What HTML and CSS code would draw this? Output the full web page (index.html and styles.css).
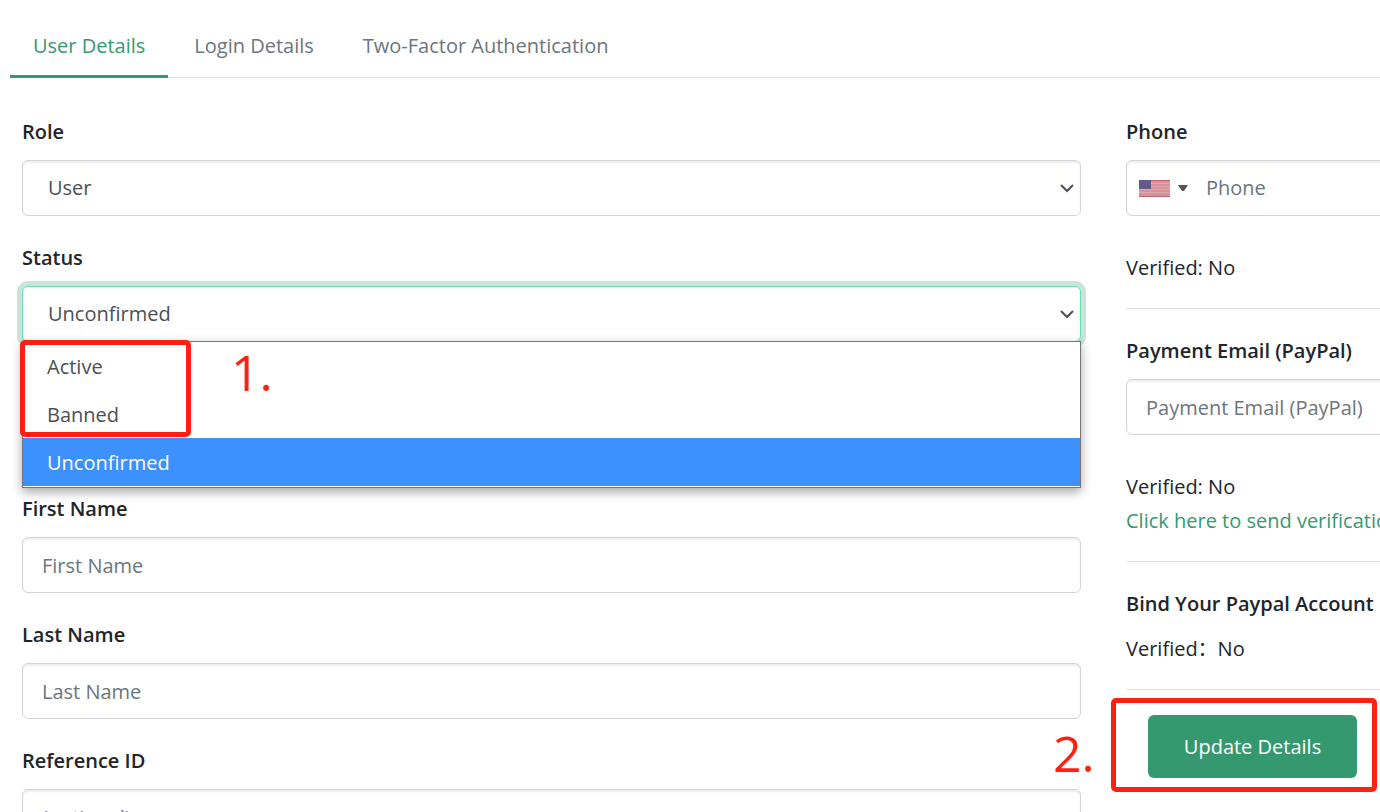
FILE: index.html
```html
<!DOCTYPE html>
<html lang="en">
<head>
<meta charset="utf-8">
<title>User Details</title>
<link rel="stylesheet" href="styles.css">
</head>
<body>
<main class="page">
  <nav class="tabs">
    <a class="tab tab-active" href="#user">User Details</a>
    <a class="tab" href="#login">Login Details</a>
    <a class="tab" href="#two-factor">Two-Factor Authentication</a>
  </nav>
  <form class="columns">
    <div class="column">
      <div class="field">
        <label class="label" for="role">Role</label>
        <div class="select-box">
          <select class="control select" id="role"><option>User</option></select>
          <svg class="chevron" viewBox="0 0 14 10" aria-hidden="true"><path d="M1 2l6 6 6-6"/></svg>
        </div>
      </div>
      <div class="field field-open">
        <label class="label" for="status">Status</label>
        <div class="select-box">
          <select class="control select select-focused" id="status"><option>Active</option><option>Banned</option><option selected>Unconfirmed</option></select>
          <svg class="chevron" viewBox="0 0 14 10" aria-hidden="true"><path d="M1 2l6 6 6-6"/></svg>
        </div>
        <div class="menu">
          <ul class="options" role="listbox" aria-label="Status">
            <li class="option" role="option">Active</li>
            <li class="option" role="option">Banned</li>
            <li class="option option-selected" role="option" aria-selected="true">Unconfirmed</li>
          </ul>
          <span class="mark mark-options"></span>
          <span class="step step-one">1.</span>
        </div>
      </div>
      <div class="field">
        <label class="label" for="first">First Name</label>
        <input class="control" id="first" type="text" placeholder="First Name">
      </div>
      <div class="field">
        <label class="label" for="last">Last Name</label>
        <input class="control" id="last" type="text" placeholder="Last Name">
      </div>
      <div class="field">
        <label class="label" for="reference">Reference ID</label>
        <input class="control" id="reference" type="text" placeholder="(optional)">
      </div>
    </div>
    <div class="column">
      <section class="group">
        <label class="label" for="phone">Phone</label>
        <div class="control phone">
          <button class="country" type="button" aria-label="United States">
            <svg class="flag" viewBox="0 0 31 17" aria-hidden="true">
              <rect width="31" height="17" fill="#d9909a"/>
              <path d="M0 .5h31M0 16.5h31" stroke="#c4626e"/>
              <path d="M0 3.5h31M0 6.5h31M0 9.5h31M0 12.5h31" stroke="#e0a9b0"/>
              <rect width="12" height="9" fill="#5f5b8a"/>
            </svg>
            <svg class="caret" viewBox="0 0 10 6" aria-hidden="true"><path d="M0 0h10L6 6H4z"/></svg>
          </button>
          <input class="phone-input" id="phone" type="tel" placeholder="Phone">
        </div>
        <p class="note note-spaced">Verified: No</p>
      </section>
      <section class="group">
        <label class="label" for="email">Payment Email (PayPal)</label>
        <input class="control" id="email" type="email" placeholder="Payment Email (PayPal)">
        <p class="note note-spaced">Verified: No</p>
        <p class="note"><a class="link" href="#verify">Click here to send verification email</a></p>
      </section>
      <section class="group">
        <h2 class="label">Bind Your Paypal Account</h2>
        <p class="note">Verified：No</p>
      </section>
      <div class="action">
        <button class="submit" type="button">Update Details</button>
        <span class="mark mark-submit"></span>
        <span class="step step-two">2.</span>
      </div>
    </div>
  </form>
</main>
</body>
</html>
```

FILE: styles.css
```css
* { box-sizing: border-box; }
html { height: 100%; overflow: hidden; }
body {
  height: 100%;
  margin: 0;
  overflow: hidden;
  background: #fff;
  color: #212529;
  font: 20px/34px "Open Sans", "Noto Sans CJK SC", sans-serif;
}
input, select, button { font: inherit; }
.page { width: 120%; }

.tabs {
  display: flex;
  gap: 3px;
  margin-left: 10px;
  padding-top: 15px;
  border-bottom: 1px solid #dee2e6;
}
.tab {
  margin-bottom: -1px;
  padding: 14px 23px 12px;
  border-bottom: 3px solid transparent;
  color: #6c757d;
  text-decoration: none;
}
.tab-active { border-color: #35996f; color: #35996f; }

.columns {
  display: grid;
  grid-template-columns: 2fr 1fr;
  padding-top: 37px;
}
.column { min-width: 0; padding: 0 23px 0 22px; }
.field { margin-bottom: 25px; }
.field-open { margin-bottom: 4px; }
.label {
  display: block;
  margin: 0 0 11px;
  font-size: 20px;
  font-weight: 600;
}
.control {
  display: block;
  width: 100%;
  height: 56px;
  padding: 0 19px;
  border: 1px solid #ced4da;
  border-radius: 6px;
  background: #fff;
  box-shadow: inset 0 2px 2px rgba(0, 0, 0, .07);
  color: #495057;
  outline: 0;
}
::placeholder { color: #6c757d; opacity: 1; }
.select-box { position: relative; }
.select { padding: 0 25px; appearance: none; }
.select-focused {
  border-color: #69dfb0;
  box-shadow: 0 0 0 5px #cae4d9;
}
.chevron {
  position: absolute;
  top: 23px;
  right: 7px;
  width: 14px;
  height: 10px;
  fill: none;
  stroke: #495057;
  stroke-width: 2;
}

.menu {
  position: relative;
  margin-top: -1px;
  border: 1px solid #767676;
  background: #fff;
  box-shadow: 0 4px 10px rgba(0, 0, 0, .35);
}
.options { margin: 0; padding: 0 0 1px; list-style: none; }
.option { padding: 8px 24px 6px; color: #495057; }
.option-selected { background: #3c91ff; color: #fff; }
.mark {
  position: absolute;
  border: 5px solid #ff2012;
  border-radius: 5px;
  pointer-events: none;
}
.mark-options { top: -2px; left: -3px; width: 171px; height: 97px; }
.step {
  position: absolute;
  color: #ff2012;
  font-size: 50px;
  line-height: 60px;
}
.step-one { top: 0; left: 208px; }

.phone { display: flex; align-items: center; padding: 0 0 0 12px; }
.country {
  display: flex;
  align-items: center;
  gap: 8px;
  padding: 0;
  border: 0;
  background: none;
}
.flag { width: 31px; height: 17px; }
.caret { width: 10px; height: 6px; fill: #555; }
.phone-input {
  flex: 1;
  min-width: 0;
  padding: 0 0 0 18px;
  border: 0;
  background: none;
  outline: 0;
}
.group {
  margin-bottom: 25px;
  padding-bottom: 23px;
  border-bottom: 1px solid #dee2e6;
}
.note { margin: 0; white-space: nowrap; }
.note-spaced { margin-top: 35px; }
.link { color: #35996f; text-decoration: none; }
.action { position: relative; padding-left: 22px; }
.submit {
  display: block;
  width: 209px;
  height: 63px;
  padding: 0;
  border: 0;
  border-radius: 6px;
  background: #35996f;
  color: #fff;
}
.mark-submit { top: -17px; left: -15px; width: 266px; height: 94px; }
.step-two { top: 8px; left: -73px; }
```
